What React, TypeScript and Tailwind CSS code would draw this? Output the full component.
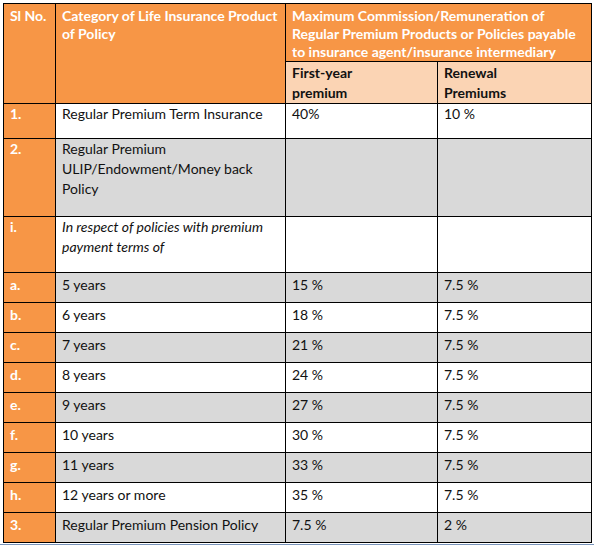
const rows: { sl: string; cat: string; first: string; renew: string; gray?: boolean; italic?: boolean; h: string }[] = [
  { sl: "1.", cat: "Regular Premium Term Insurance", first: "40%", renew: "10 %", h: "h-[35px]" },
  { sl: "2.", cat: "Regular Premium ULIP/Endowment/Money back Policy", first: "", renew: "", gray: true, h: "h-[78px]" },
  { sl: "i.", cat: "In respect of policies with premium payment terms of", first: "", renew: "", italic: true, h: "h-[56px]" },
  { sl: "a.", cat: "5 years", first: "15 %", renew: "7.5 %", gray: true, h: "h-[30px]" },
  { sl: "b.", cat: "6 years", first: "18 %", renew: "7.5 %", h: "h-[30px]" },
  { sl: "c.", cat: "7 years", first: "21 %", renew: "7.5 %", gray: true, h: "h-[30px]" },
  { sl: "d.", cat: "8 years", first: "24 %", renew: "7.5 %", h: "h-[30px]" },
  { sl: "e.", cat: "9 years", first: "27 %", renew: "7.5 %", gray: true, h: "h-[30px]" },
  { sl: "f.", cat: "10 years", first: "30 %", renew: "7.5 %", h: "h-[30px]" },
  { sl: "g.", cat: "11 years", first: "33 %", renew: "7.5 %", gray: true, h: "h-[30px]" },
  { sl: "h.", cat: "12 years or more", first: "35 %", renew: "7.5 %", h: "h-[30px]" },
  { sl: "3.", cat: "Regular Premium Pension Policy", first: "7.5 %", renew: "2 %", gray: true, h: "h-[30px]" },
]

export default function App() {
  return (
    <div className="w-[594px] h-[545px] bg-white flex flex-col font-['Lato','Liberation_Sans',sans-serif]">
      <div className="flex-1 pl-[3px] pt-[3px]">
        <table className="table-fixed border-collapse w-[588px] text-[14px] text-[#111]">
          <colgroup>
            <col className="w-[52px]" />
            <col className="w-[230px]" />
            <col className="w-[152px]" />
            <col className="w-[154px]" />
          </colgroup>
          <thead>
            <tr className="h-[58px]">
              <th rowSpan={2} className="border border-black bg-[#f79646] text-white text-left align-top font-bold px-1.5 pt-[3px] leading-[18px]">
                Sl No.
              </th>
              <th rowSpan={2} className="border border-black bg-[#f79646] text-white text-left align-top font-bold px-1.5 pt-[3px] leading-[18px]">
                Category of Life Insurance Product of Policy
              </th>
              <th colSpan={2} className="border border-black bg-[#f79646] text-white text-left align-top font-bold px-1.5 pt-[3px] leading-[18px]">
                Maximum Commission/Remuneration of Regular Premium Products or Policies payable to insurance agent/insurance intermediary
              </th>
            </tr>
            <tr className="h-[42px]">
              <th className="border border-black bg-[#fbd4b4] text-left align-top font-bold px-1.5 pt-px leading-[20px]">
                First-year<br />premium
              </th>
              <th className="border border-black bg-[#fbd4b4] text-left align-top font-bold px-1.5 pt-px leading-[20px]">
                Renewal<br />Premiums
              </th>
            </tr>
          </thead>
          <tbody>
            {rows.map((r) => {
              const pad = r.h === "h-[30px]" ? "pt-[2px]" : "pt-0"
              const bg = r.gray ? "bg-[#d9d9d9]" : "bg-white"
              return (
                <tr key={r.sl} className={r.h}>
                  <td className={`border border-black bg-[#f79646] text-white font-bold align-top px-1.5 leading-[20px] ${pad}`}>
                    {r.sl}
                  </td>
                  <td className={`border border-black align-top px-1.5 leading-[20px] ${pad} ${bg} ${r.italic ? "italic" : ""}`}>
                    {r.cat}
                  </td>
                  <td className={`border border-black align-top px-1.5 leading-[20px] ${pad} ${bg}`}>
                    {r.first}
                  </td>
                  <td className={`border border-black align-top px-1.5 leading-[20px] ${pad} ${bg}`}>
                    {r.renew}
                  </td>
                </tr>
              )
            })}
          </tbody>
        </table>
      </div>
      <div className="h-px bg-[#7a95bb]" />
    </div>
  )
}
